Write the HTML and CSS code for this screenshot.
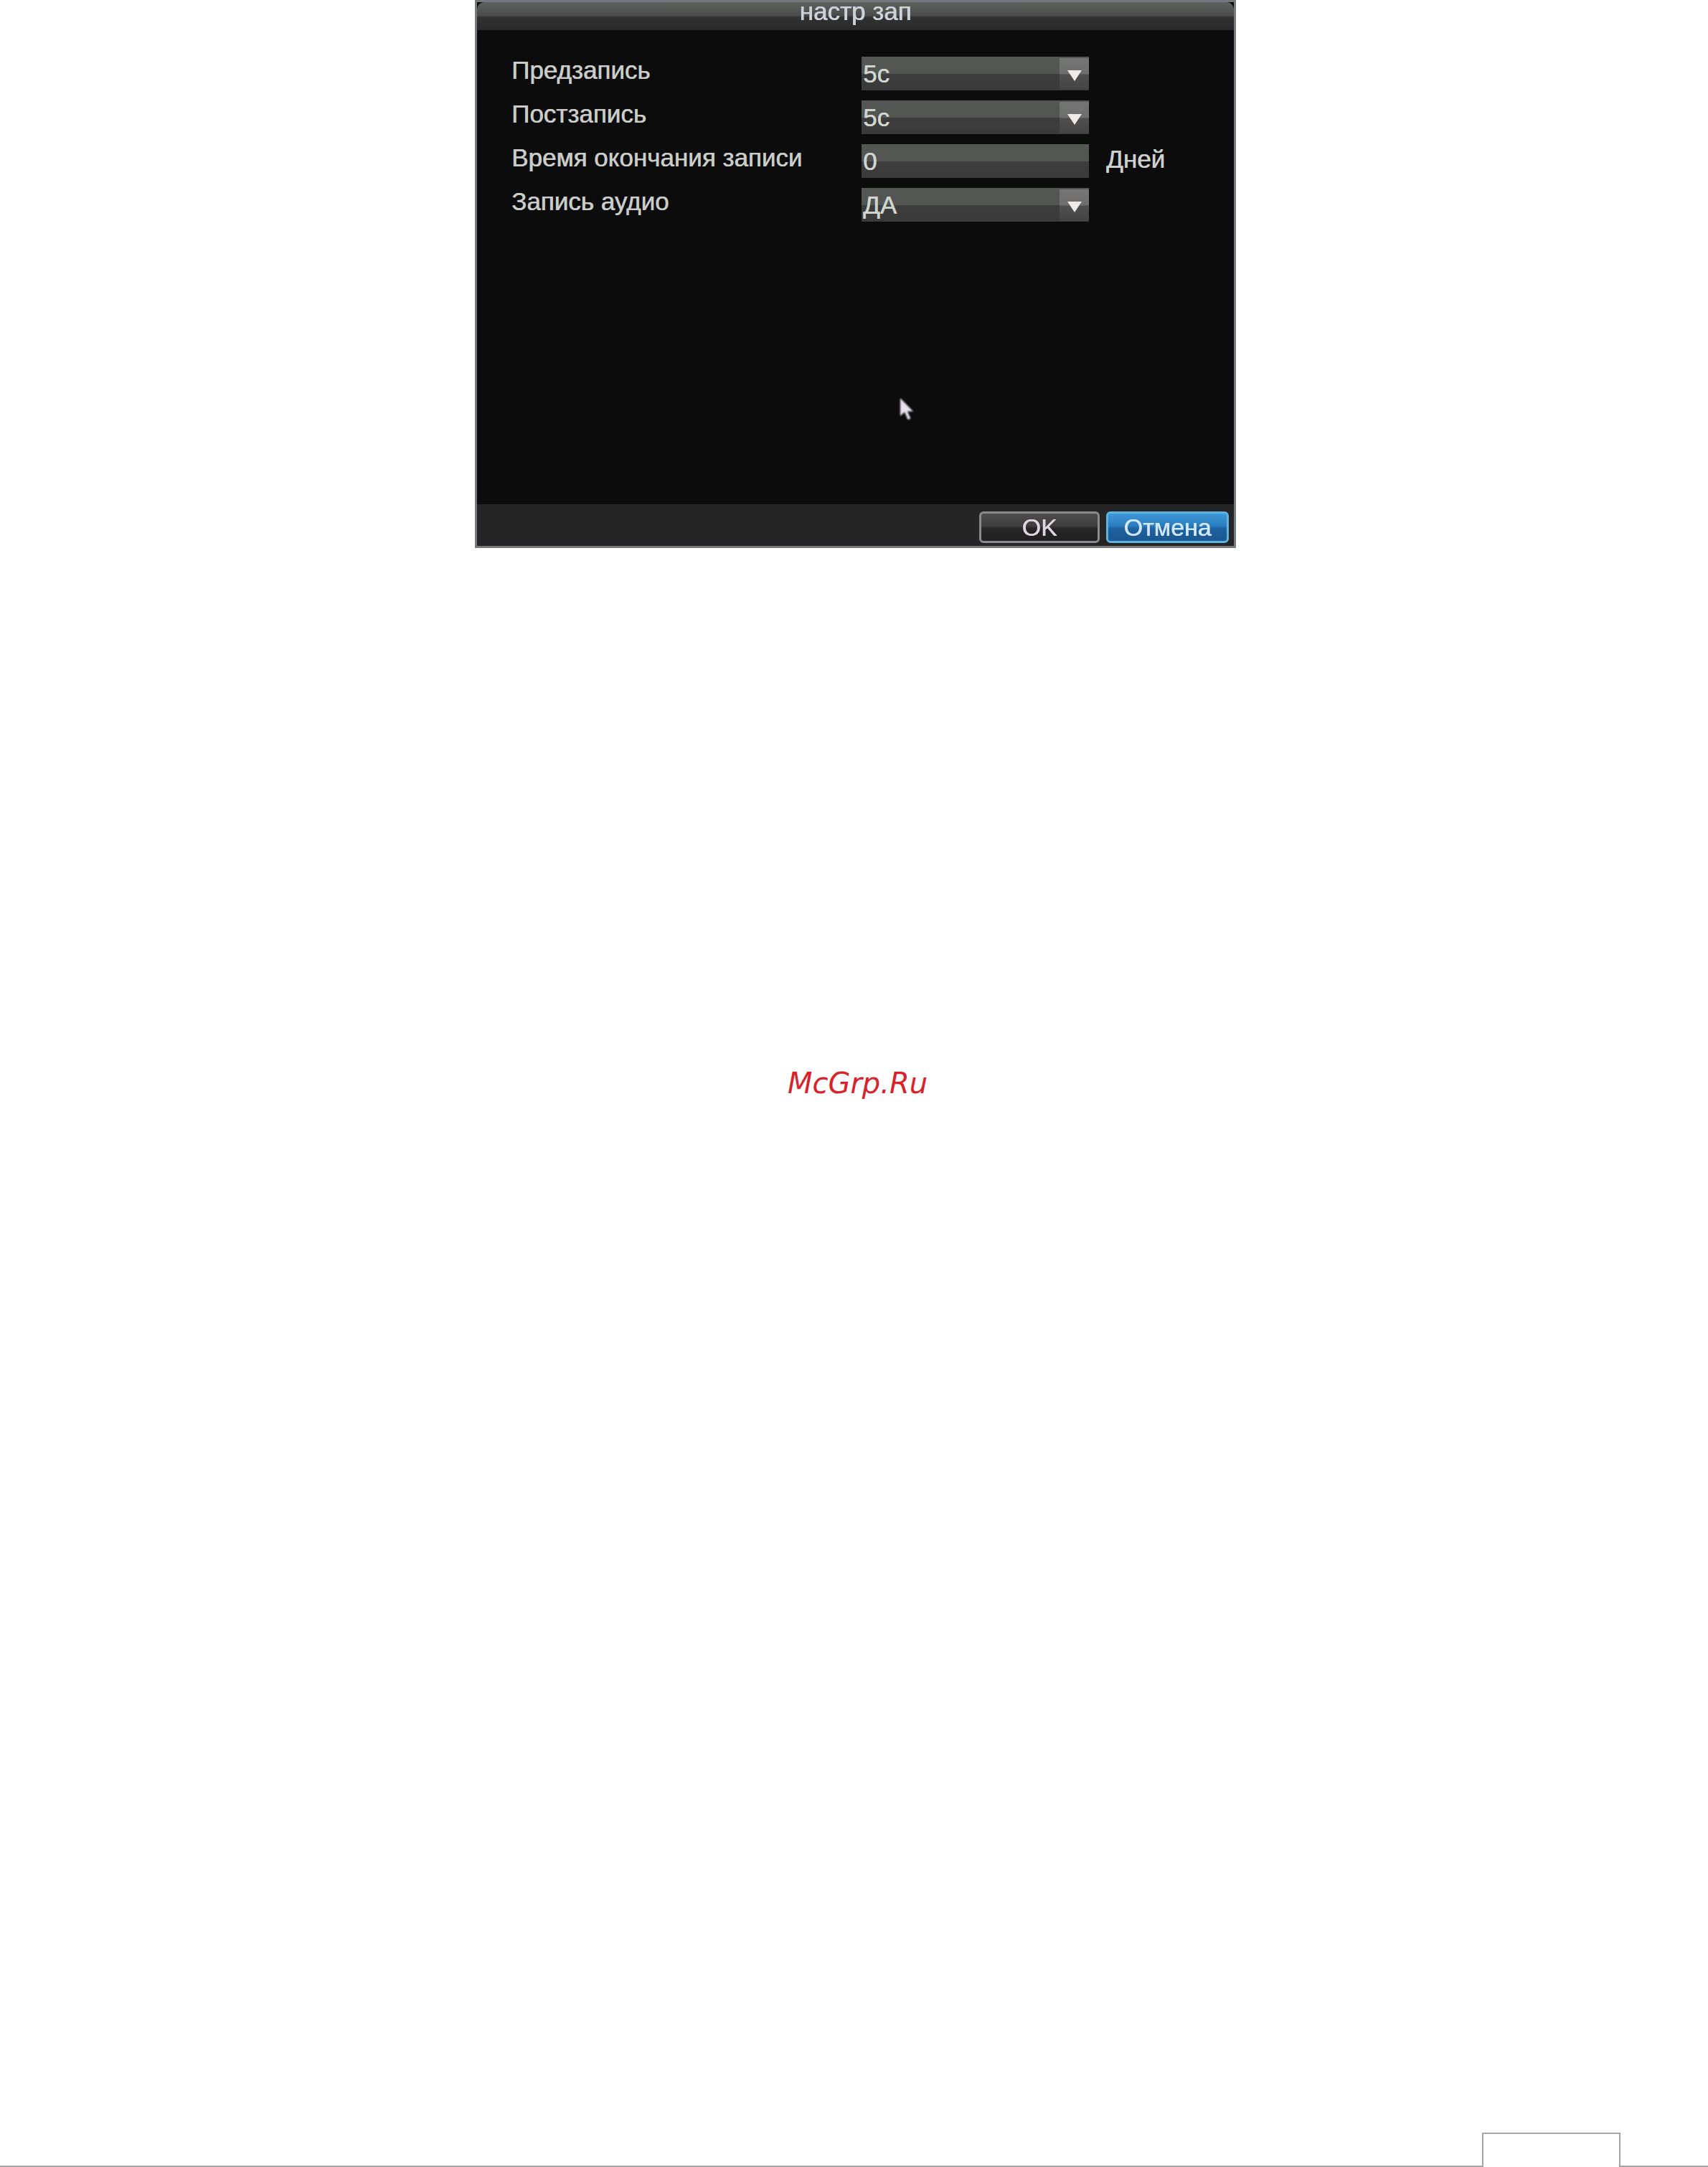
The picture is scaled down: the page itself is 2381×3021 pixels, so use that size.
FILE: index.html
```html
<!DOCTYPE html>
<html lang="ru">
<head>
<meta charset="utf-8">
<title>настр зап</title>
<link rel="stylesheet" href="styles.css">
</head>
<body>
<div class="page">
  <div class="dialog">
    <div class="titlebar"><span class="title">настр зап</span></div>
    <div class="dbody">
      <div class="form">
        <div class="label">Предзапись</div>
        <div class="field select"><span class="val">5с</span><span class="drop"><span class="tri"></span></span></div>
        <div class="unit"></div>

        <div class="label">Постзапись</div>
        <div class="field select"><span class="val">5с</span><span class="drop"><span class="tri"></span></span></div>
        <div class="unit"></div>

        <div class="label">Время окончания записи</div>
        <div class="field"><span class="val">0</span></div>
        <div class="unit">Дней</div>

        <div class="label">Запись аудио</div>
        <div class="field select"><span class="val">ДА</span><span class="drop"><span class="tri"></span></span></div>
        <div class="unit"></div>
      </div>
      <svg class="cursor" width="24" height="34" viewBox="0 0 24 34" aria-hidden="true">
        <path d="M2 1 L2 26 L8 20.5 L12.5 31 L16.5 29.5 L12 19.5 L20 19.5 Z" fill="#e6e2ee"/>
      </svg>
    </div>
    <div class="dfoot">
      <button class="btn ok">OK</button>
      <button class="btn cancel">Отмена</button>
    </div>
  </div>

  <div class="mark-wrap">
    <div class="mark">McGrp.Ru</div>
  </div>

  <div class="pagefoot">
    <div class="seg seg-left"></div>
    <div class="tab"></div>
    <div class="seg seg-right"></div>
  </div>
</div>
</body>
</html>
```

FILE: styles.css
```css
html, body {
  margin: 0;
  padding: 0;
  background: #ffffff;
}

.page {
  width: 2381px;
  height: 3021px;
  display: flex;
  flex-direction: column;
  font-family: "Liberation Sans", Arial, sans-serif;
}

/* ---------- dialog ---------- */
.dialog {
  box-sizing: border-box;
  width: 1061px;
  height: 764px;
  margin-left: 662px;
  border: 3px solid #77787b;
  background: #0c0c0c;
  display: flex;
  flex-direction: column;
  filter: blur(0.7px);
}

.titlebar {
  height: 39px;
  text-align: center;
  background: linear-gradient(#616361 0%, #565856 20%, #4a4b4a 48%, #303130 54%, #2a2a2a 100%);
  border-radius: 10px 10px 0 0;
  flex: none;
}

.title {
  display: inline-block;
  font-size: 35px;
  line-height: 30px;
  padding-top: 0;
  margin-top: -2px;
  color: #cdd2da;
  text-shadow: 0.6px 0 0 #cdd2da;
}

.dbody {
  position: relative;
  flex: 1;
  background: #0c0c0c;
  padding: 37px 0 0 48px;
}

.form {
  display: grid;
  grid-template-columns: 488px 317px auto;
  grid-auto-rows: 47px;
  row-gap: 14px;
  align-items: start;
}

.label {
  font-size: 35px;
  line-height: 38px;
  color: #c9ccc9;
  white-space: nowrap;
  text-shadow: 0.6px 0 0 #c9ccc9;
}

.field {
  position: relative;
  height: 47px;
  background: linear-gradient(#555755 0%, #535553 52%, #3c3d3c 52%, #393a39 100%);
  display: flex;
  align-items: flex-start;
}

.val {
  padding-left: 2px;
  font-size: 35px;
  line-height: 47px;
  color: #d0d6cf;
  text-shadow: 0.6px 0 0 #d0d6cf;
}

.drop {
  margin-left: auto;
  width: 41px;
  height: 44px;
  margin-top: 2px;
  background: linear-gradient(#747574 0%, #6d6e6d 50%, #4e4f4e 52%, #434443 100%);
  display: flex;
  justify-content: center;
}

.tri {
  margin-top: 17px;
  width: 0;
  height: 0;
  border-left: 10px solid transparent;
  border-right: 10px solid transparent;
  border-top: 15px solid #ecebea;
}

.unit {
  padding-left: 24px;
  font-size: 35px;
  line-height: 42px;
  color: #cdd0cd;
  text-shadow: 0.6px 0 0 #cdd0cd;
}

.cursor {
  position: absolute;
  left: 588px;
  top: 512px;
  filter: blur(1px);
}

.dfoot {
  flex: none;
  height: 58px;
  box-sizing: border-box;
  background: #252525;
  display: flex;
  justify-content: flex-end;
  align-items: flex-start;
  gap: 9px;
  padding: 10px 7px 0 0;
}

.btn {
  box-sizing: border-box;
  height: 44px;
  padding: 0;
  font-family: "Liberation Sans", Arial, sans-serif;
  font-size: 34px;
  line-height: 38px;
  border-radius: 6px;
}

.ok {
  width: 168px;
  border: 3px solid #8b8b8b;
  color: #ddd6e0;
  text-shadow: 0.6px 0 0 #ddd6e0;
  background: linear-gradient(#4d4d4d 0%, #3e3e3e 45%, #262626 55%, #202020 100%);
}

.cancel {
  width: 171px;
  border: 3px solid #5fb2e2;
  color: #d2e6f4;
  text-shadow: 0.6px 0 0 #d2e6f4;
  background: linear-gradient(#3d98d8 0%, #2a7dbf 45%, #1d629f 55%, #1a5790 100%);
}

/* ---------- watermark ---------- */
.mark-wrap {
  width: 1061px;
  margin-left: 662px;
  margin-top: 722px;
}

.mark {
  text-align: center;
  padding-left: 6px;
  font-family: "DejaVu Sans", sans-serif;
  font-style: italic;
  font-size: 40px;
  line-height: 48px;
  color: #d7242b;
}

/* ---------- page footer ---------- */
.pagefoot {
  margin-top: auto;
  height: 48px;
  display: flex;
  align-items: flex-end;
}

.seg {
  height: 0;
  border-bottom: 2px solid #a6a6a6;
}

.seg-left {
  width: 2066px;
}

.seg-right {
  flex: 1;
}

.tab {
  box-sizing: border-box;
  width: 193px;
  height: 48px;
  border: 2px solid #a6a6a6;
  border-bottom: none;
}
```
